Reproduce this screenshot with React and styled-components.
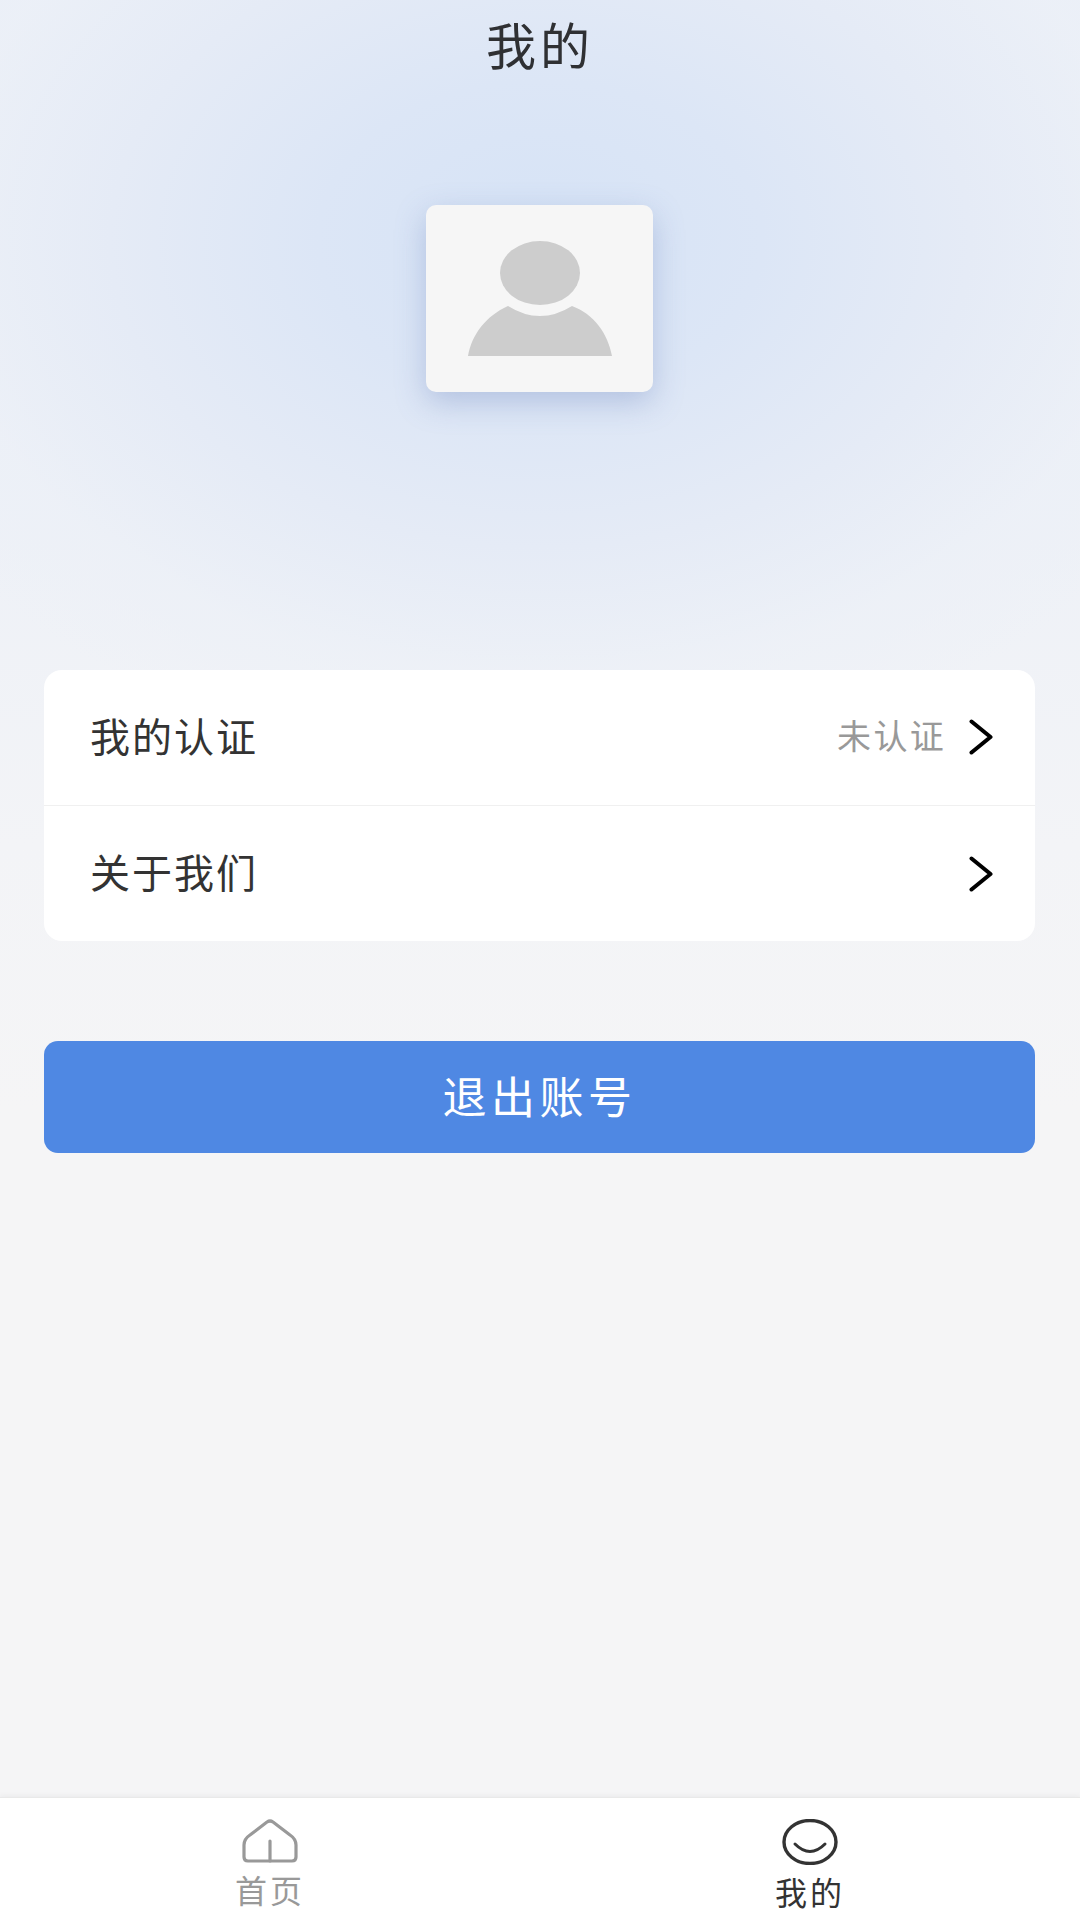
import React from 'react';
import styled, { createGlobalStyle } from 'styled-components';

const GlobalStyle = createGlobalStyle`
  html, body {
    margin: 0;
    padding: 0;
  }
  body {
    font-family: "Noto Sans CJK SC", "Noto Sans", sans-serif;
    background: #f5f5f6;
  }
`;

const Page = styled.div`
  width: 1080px;
  height: 1920px;
  display: flex;
  flex-direction: column;
  overflow: hidden;
  background:
    radial-gradient(ellipse 740px 530px at 540px 240px, #d6e3f6 0%, #dce6f6 30%, #e5ebf6 58%, rgba(236, 240, 247, 0.7) 82%, rgba(245, 245, 246, 0) 100%),
    linear-gradient(180deg, #eaeff8 0%, #eef1f7 28%, #f3f4f7 44%, #f5f5f6 58%);
`;

const Title = styled.h1`
  margin: 0;
  height: 90px;
  line-height: 86px;
  text-align: center;
  font-size: 50px;
  font-weight: 400;
  letter-spacing: 4px;
  color: #2f3033;
`;

const Avatar = styled.div`
  align-self: center;
  width: 227px;
  height: 187px;
  margin: 115px 1px 0 0;
  border-radius: 10px;
  background: #f6f6f6;
  box-shadow: 0 10px 30px rgba(110, 135, 190, 0.38);
  display: flex;
`;

const Card = styled.section`
  margin: 278px 45px 0 44px;
  background: #fff;
  border-radius: 18px;
  overflow: hidden;
`;

const Row = styled.div`
  height: 135px;
  padding: 0 42px 0 46px;
  display: flex;
  align-items: center;
  border-top: ${(p) => (p.$divided ? '1px solid #f0f0f0' : 'none')};
`;

const RowLabel = styled.span`
  flex: 1;
  font-size: 40px;
  letter-spacing: 2px;
  color: #333;
  padding-bottom: 6px;
`;

const RowStatus = styled.span`
  font-size: 34px;
  letter-spacing: 2.3px;
  color: #999;
  margin-right: 23px;
  padding-bottom: 6px;
`;

const RowArrow = styled.span`
  display: flex;
  padding-bottom: ${(p) => (p.$raised ? '2px' : '0')};
`;

const LogoutButton = styled.button`
  margin: 100px 45px 0 44px;
  height: 112px;
  padding: 0 0 4px;
  border: none;
  border-radius: 14px;
  background: #4f88e3;
  color: #fff;
  font-family: inherit;
  font-size: 44px;
  letter-spacing: 4.5px;
`;

const TabBar = styled.nav`
  margin-top: auto;
  height: 122px;
  background: #fff;
  border-top: 1px solid #e9e9e9;
  box-shadow: 0 -2px 5px rgba(0, 0, 0, 0.04);
  display: grid;
  grid-template-columns: 1fr 1fr;
`;

const Tab = styled.div`
  display: flex;
  flex-direction: column;
  align-items: center;
  padding-top: 21px;
  color: ${(p) => (p.$active ? '#333' : '#999')};
`;

const TabLabel = styled.span`
  font-size: 32px;
  line-height: 40px;
  letter-spacing: 3px;
  margin-top: 6px;
`;

const Chevron = () => (
  <svg width="24" height="36" viewBox="0 0 24 36" fill="none" stroke="#000" strokeWidth="4" strokeLinecap="round" strokeLinejoin="round">
    <path d="M2.5 2.5 L21.5 18 L2.5 33.5" />
  </svg>
);

const PersonIcon = () => (
  <svg width="227" height="187" viewBox="0 0 227 187" fill="#cdcdcd">
    <ellipse cx="114" cy="68" rx="40" ry="32" />
    <path d="M42 151 C46 129 60 111 82 101 Q114 121 146 101 C168 109 182 129 186 151 Z" />
  </svg>
);

const HomeIcon = () => (
  <svg width="56" height="44" viewBox="0 0 56 44" fill="none" stroke="#999" strokeWidth="3.2" strokeLinejoin="round" strokeLinecap="round">
    <path d="M25 3 Q28 1 31 3 L48 16 Q54 20 54 26 V38 Q54 42 50 42 H6 Q2 42 2 38 V26 Q2 20 8 16 Z" />
    <path d="M28 22 V42" />
  </svg>
);

const SmileIcon = () => (
  <svg width="56" height="46" viewBox="0 0 56 46" fill="none" stroke="#333" strokeLinecap="round">
    <ellipse cx="28" cy="23" rx="26" ry="21.5" strokeWidth="3.4" />
    <path d="M13 25 Q28 40 43 25" strokeWidth="3" />
  </svg>
);

export default function App() {
  return (
    <Page>
      <GlobalStyle />
      <Title>我的</Title>
      <Avatar>
        <PersonIcon />
      </Avatar>
      <Card>
        <Row>
          <RowLabel>我的认证</RowLabel>
          <RowStatus>未认证</RowStatus>
          <RowArrow $raised>
            <Chevron />
          </RowArrow>
        </Row>
        <Row $divided>
          <RowLabel>关于我们</RowLabel>
          <RowArrow>
            <Chevron />
          </RowArrow>
        </Row>
      </Card>
      <LogoutButton>退出账号</LogoutButton>
      <TabBar>
        <Tab>
          <HomeIcon />
          <TabLabel>首页</TabLabel>
        </Tab>
        <Tab $active>
          <SmileIcon />
          <TabLabel>我的</TabLabel>
        </Tab>
      </TabBar>
    </Page>
  );
}
